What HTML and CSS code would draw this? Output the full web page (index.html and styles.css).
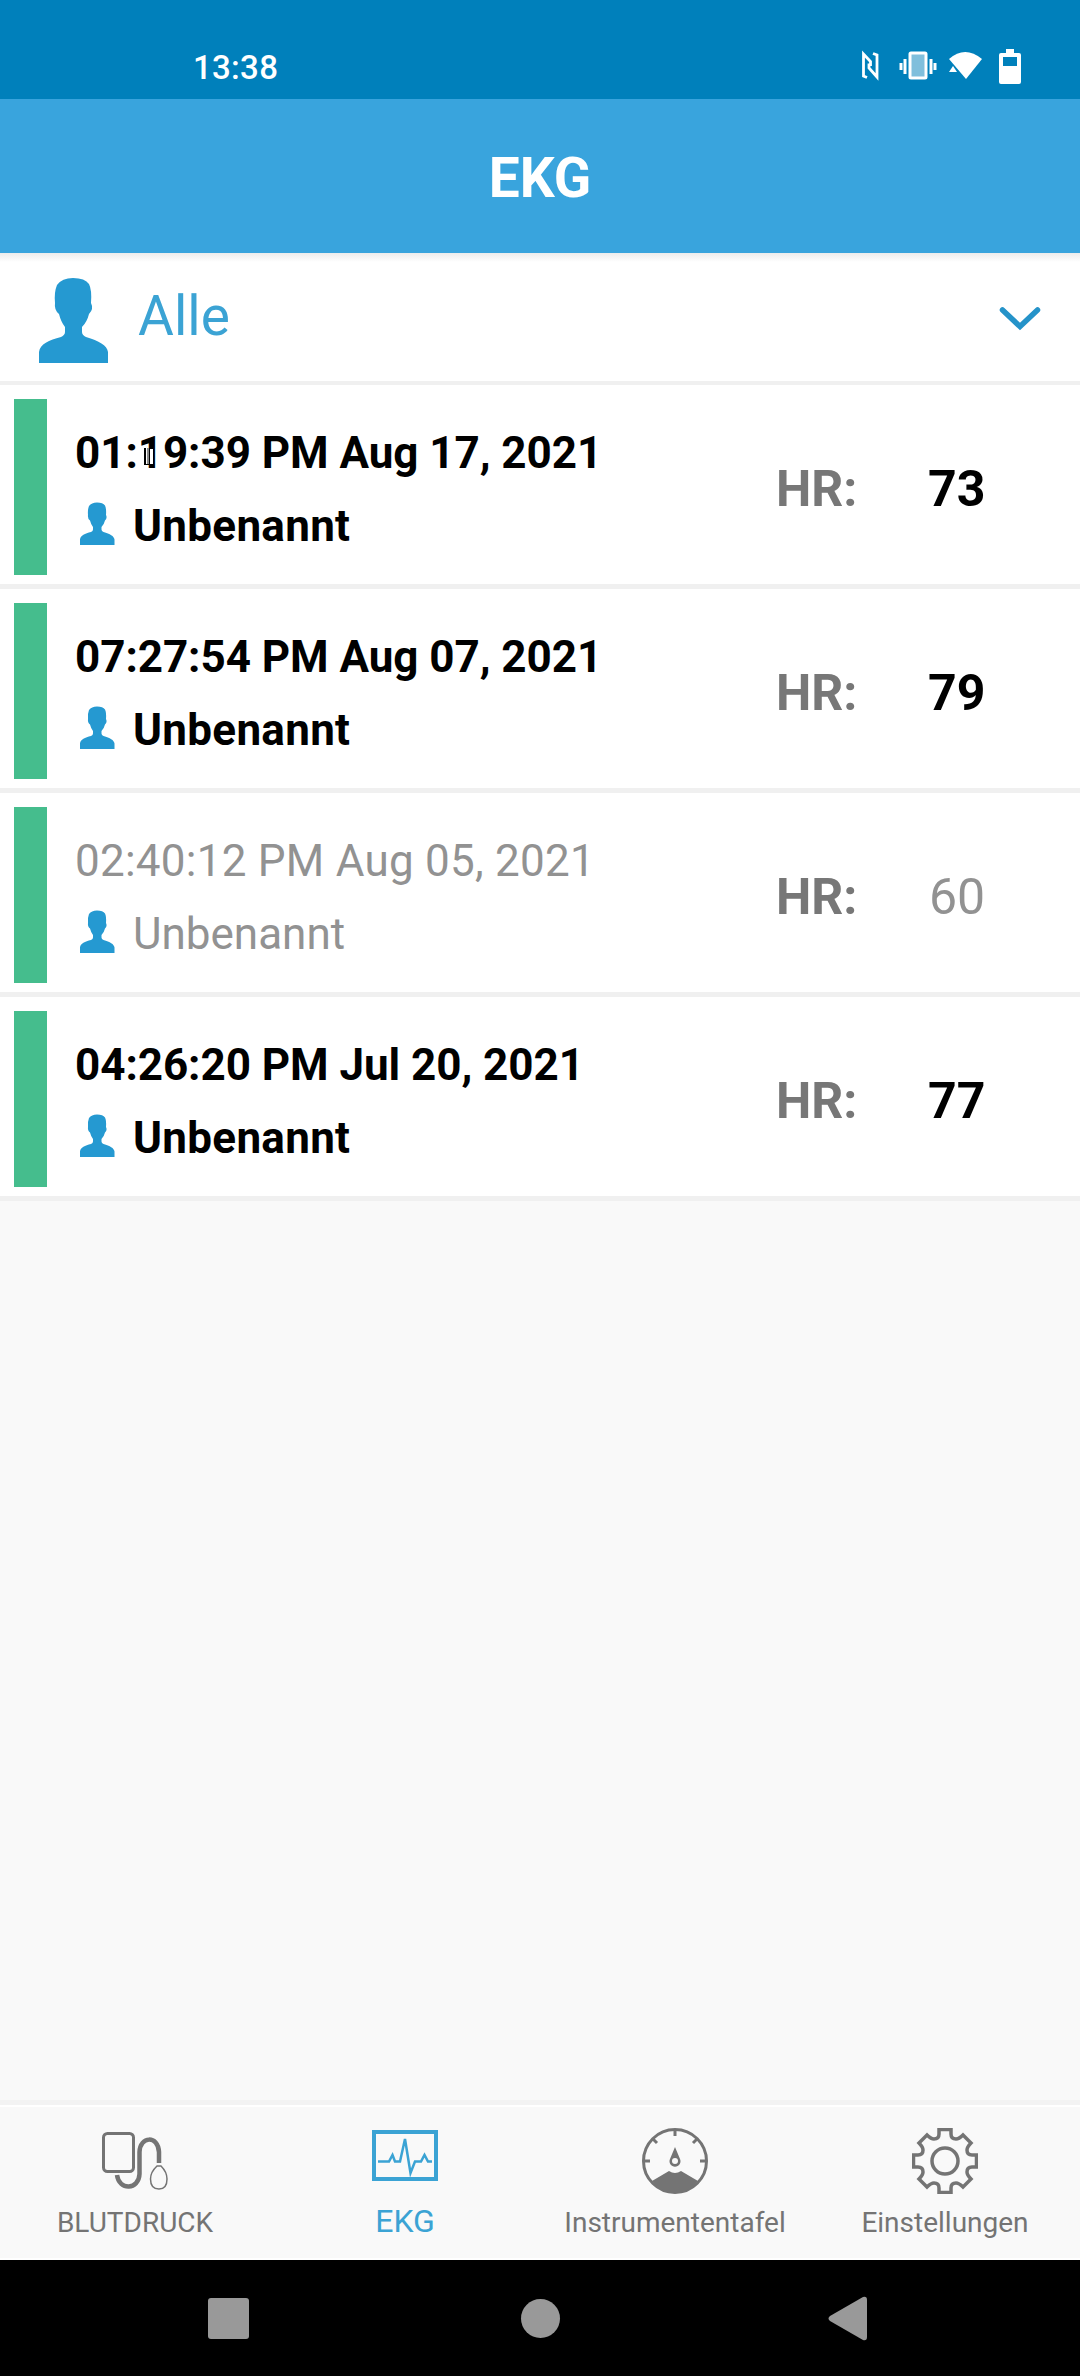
FILE: index.html
```html
<!DOCTYPE html>
<html lang="de">
<head>
    <meta charset="UTF-8">
    <title>EKG</title>
    <link rel="stylesheet" href="styles.css">
</head>
<body>
    <svg class="defs">
        <symbol id="person" viewBox="0 0 70 86">
            <path d="M0 86V75C1 67 10 63 22 60Q26 58 26 55V50Q22 45 20 37Q15 33 16 26Q15 15 18 8Q23 1 34 1Q46 1 50 7Q53 13 52 26Q55 32 50 37Q48 45 43 50V55Q43 58 47 60C60 64 68 68 69 75V86Z"/>
        </symbol>
    </svg>

    <div id="status-bar">
        <span class="clock">13:38</span>
        <svg class="status-icons" width="162" height="38" viewBox="0 0 162 38">
            <path d="M7 28.500L3.500 27V5L10.500 12.500V17M13 4.500L17 6V28L9 19V14.500" fill="none" stroke="#fff" stroke-width="2.800"/>
            <rect x="50" y="4" width="16" height="25" rx="1" fill="#80bfdc" stroke="#fff" stroke-width="3"/>
            <path d="M45 10V25M41 14V21M71 10V25M75 14V21" stroke="#fff" stroke-width="3"/>
            <path d="M89 10Q105-4 122 10L106 30Z" fill="#fff"/>
            <path d="M93 17L89 23H97Z" fill="#fff"/>
            <path d="M139 4H146V0H154V4H159Q161 4 161 6V33Q161 35 159 35H141Q139 35 139 33V6Q139 4 141 4Z" fill="#fff"/>
            <rect x="143" y="8" width="14" height="9" fill="#0080bb"/>
        </svg>
    </div>

    <div id="header">EKG</div>

    <div id="filter">
        <svg class="user-big"><use href="#person"/></svg>
        <span class="filter-name">Alle</span>
        <svg class="arrow" width="42" height="26" viewBox="0 0 42 26"><path d="M3.500 4L21 20.500L38.500 4" fill="none" stroke="#2593c9" stroke-width="5.500" stroke-linecap="round"/></svg>
    </div>

    <div id="list">
        <div class="item unread">
            <div class="bar"></div>
            <div class="info">
                <div class="time">01:19:39 PM Aug 17, 2021
                    <svg class="marker" width="10" height="17" viewBox="0 0 10 17">
                        <rect width="10" height="17" fill="#000"/>
                        <rect x="2" width="1" height="16" fill="#fff"/>
                        <rect x="3" width="2" height="16" fill="#888"/>
                        <rect x="6" y="1" width="3" height="15" fill="#fff"/>
                    </svg>
                </div>
                <div class="name"><svg class="user"><use href="#person"/></svg>Unbenannt</div>
            </div>
            <div class="hr">HR:</div>
            <div class="value">73</div>
        </div>
        <div class="item unread">
            <div class="bar"></div>
            <div class="info">
                <div class="time">07:27:54 PM Aug 07, 2021</div>
                <div class="name"><svg class="user"><use href="#person"/></svg>Unbenannt</div>
            </div>
            <div class="hr">HR:</div>
            <div class="value">79</div>
        </div>
        <div class="item">
            <div class="bar"></div>
            <div class="info">
                <div class="time">02:40:12 PM Aug 05, 2021</div>
                <div class="name"><svg class="user"><use href="#person"/></svg>Unbenannt</div>
            </div>
            <div class="hr">HR:</div>
            <div class="value">60</div>
        </div>
        <div class="item unread">
            <div class="bar"></div>
            <div class="info">
                <div class="time">04:26:20 PM Jul 20, 2021</div>
                <div class="name"><svg class="user"><use href="#person"/></svg>Unbenannt</div>
            </div>
            <div class="hr">HR:</div>
            <div class="value">77</div>
        </div>
    </div>

    <div id="tabs">
        <div class="tab">
            <svg width="66" height="66" viewBox="0 0 66 66" fill="none" stroke="#747474">
                <rect x="1.500" y="5.500" width="30" height="38" rx="4" stroke-width="3"/>
                <path d="M15 47C17 63 37 62 37.500 46V24C38 8 56 7 57 24V35" stroke-width="4.500"/>
                <path d="M55 38H59Q65 44 65 51Q65 61 57 61Q48.500 61 48.500 51Q48.500 44 55 38Z" stroke-width="1.500"/>
            </svg>
            <span>BLUTDRUCK</span>
        </div>
        <div class="tab active">
            <svg width="66" height="66" viewBox="0 0 66 66" fill="none" stroke="#3ba3d4">
                <rect x="2" y="4" width="62" height="47" stroke-width="4"/>
                <path d="M6 33.500H17L20.500 27L23 33.500H28L33 11L38.500 45L43 33.500H49L52.500 27L56 33.500H60" stroke-width="2.500"/>
            </svg>
            <span>EKG</span>
        </div>
        <div class="tab">
            <svg width="66" height="66" viewBox="0 0 66 66" fill="none" stroke="#747474">
                <circle cx="33" cy="33" r="31.500" stroke-width="3"/>
                <path d="M33 2V8M2 33H8M58 33H64M11 11L15 15M55 11L51 15" stroke-width="3"/>
                <path d="M33 19L38 31A5.500 5.500 0 1 1 28 31Z" fill="#747474" stroke="none"/>
                <circle cx="33" cy="33" r="3" fill="#f9f9f9" stroke="none"/>
                <path d="M10 53L27 43Q33 47 39 43L56 53Q47 65 33 65Q19 65 10 53Z" fill="#747474" stroke="none"/>
            </svg>
            <span>Instrumententafel</span>
        </div>
        <div class="tab">
            <svg width="66" height="66" viewBox="0 0 66 66" fill="none" stroke="#747474" stroke-width="3.500">
                <path d="M27 1.500H39V6Q39 11 44 11Q47 11 51 7L59 15Q55 19 55 22Q55 27 60 27H64.500V39H60Q55 39 55 44Q55 47 59 51L51 59Q47 55 44 55Q39 55 39 60V64.500H27V60Q27 55 22 55Q19 55 15 59L7 51Q11 47 11 44Q11 39 6 39H1.500V27H6Q11 27 11 22Q11 19 7 15L15 7Q19 11 22 11Q27 11 27 6Z"/>
                <circle cx="33" cy="33" r="13"/>
            </svg>
            <span>Einstellungen</span>
        </div>
    </div>

    <div id="nav-bar">
        <svg width="660" height="46" viewBox="0 0 660 46" fill="#999">
            <rect x="0" y="2" width="41" height="41" rx="3"/>
            <circle cx="332.500" cy="22.500" r="19.500"/>
            <path d="M622 20L655 1Q659 0 659 4V41Q659 45 655 44L622 25Q619 22.500 622 20Z"/>
        </svg>
    </div>
</body>
</html>
```

FILE: styles.css
```css
* {
    box-sizing: border-box;
}
body {
    margin: 0;
    width: 1080px;
    height: 2376px;
    display: flex;
    flex-direction: column;
    font-family: Roboto, sans-serif;
    background-color: #f9f9f9;
}
svg {
    display: block;
    flex-shrink: 0;
}
.defs {
    display: none;
}
#status-bar {
    height: 99px;
    padding: 36px 58px 0 193px;
    display: flex;
    justify-content: space-between;
    background-color: #0080bb;
    color: #fff;
}
.clock {
    font-size: 33px;
    font-weight: 500;
    line-height: 63px;
    letter-spacing: 0.3px;
}
.status-icons {
    margin-top: 13px;
}
#header {
    height: 154px;
    line-height: 159px;
    text-align: center;
    font-size: 55px;
    font-weight: bold;
    color: #fff;
    background-color: #39a4dd;
}
#filter {
    height: 132px;
    padding: 0 39px 0 39px;
    display: flex;
    align-items: center;
    background: linear-gradient(#ececec, #fff 9px);
    border-bottom: 4px solid #f0f0f0;
}
.user-big {
    width: 70px;
    height: 86px;
    margin-top: 5px;
    fill: #2599d1;
}
.filter-name {
    flex: 1;
    margin-left: 29px;
    padding-bottom: 3px;
    font-size: 55px;
    line-height: 122px;
    color: #3ba3d4;
}
.arrow {
    margin-top: 3px;
}
.item {
    height: 204px;
    padding: 14px 0 0 14px;
    display: flex;
    background-color: #fff;
    border-bottom: 5px solid #f0f0f0;
    color: #929292;
}
.bar {
    width: 33px;
    height: 176px;
    background-color: #45bd8d;
}
.info {
    width: 700px;
    padding: 27px 0 0 28px;
    font-size: 44px;
}
.time {
    position: relative;
    height: 54px;
    line-height: 54px;
    letter-spacing: 0.25px;
    white-space: nowrap;
}
.marker {
    position: absolute;
    left: 69px;
    top: 22px;
}
.name {
    height: 54px;
    margin-top: 19px;
    display: flex;
    line-height: 54px;
}
.user {
    width: 35px;
    height: 43px;
    margin: 3px 18px 0 5px;
    fill: #2599d1;
}
.hr, .value {
    font-size: 50px;
    line-height: 180px;
}
.hr {
    width: 153px;
    margin-left: 29px;
    font-weight: bold;
    color: #777;
}
.unread .time, .unread .name, .unread .value {
    font-weight: bold;
    color: #000;
}
.unread .time {
    letter-spacing: -0.05px;
}
.unread .name {
    letter-spacing: 0.3px;
}
.unread .value {
    margin-left: -1px;
}
#tabs {
    height: 160px;
    margin-top: auto;
    padding-top: 28px;
    display: grid;
    grid-template-columns: repeat(4, 1fr);
    background: linear-gradient(#f3f3f3 5px, #fff 5px, #fff 7px, #f9f9f9 7px);
    border-bottom: 2px solid #fff;
}
.tab {
    display: flex;
    flex-direction: column;
    align-items: center;
    font-size: 28px;
    line-height: 58px;
    color: #747474;
}
.tab.active {
    font-size: 32px;
    line-height: 55px;
    color: #3ba3d4;
}
#nav-bar {
    height: 116px;
    padding: 36px 0 0 208px;
    background-color: #000;
}
```
